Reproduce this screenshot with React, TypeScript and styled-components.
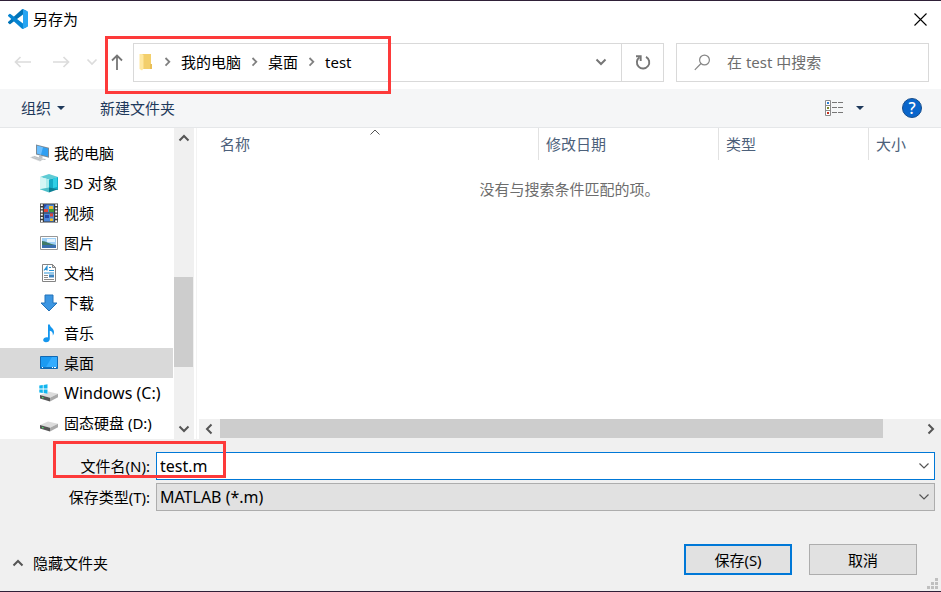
import React from 'react';
import styled, { createGlobalStyle, css } from 'styled-components';

const GlobalStyle = createGlobalStyle`
  *, *::before, *::after { box-sizing: border-box; }
  body { margin: 0; }
  body, button, input, select, table {
    font-family: "Noto Sans", "Noto Sans CJK SC", sans-serif;
    font-size: 15px;
    line-height: 20px;
    color: #000;
  }
  button { border: 0; padding: 0; background: none; cursor: default; }
  svg { display: block; flex: none; }
`;

const Dialog = styled.main`
  display: flex;
  flex-direction: column;
  min-height: 100vh;
  background: #fff;
  border-top: 1px solid #2f2038;
  border-bottom: 1px solid #2f2038;
`;

const TitleBar = styled.header`
  display: flex;
  align-items: center;
  gap: 5px;
  height: 36px;
  padding: 0 14px 0 8px;
`;

const Title = styled.h1`
  flex: 1;
  margin: 0;
  font-size: 15px;
  font-weight: 400;
`;

const NavRow = styled.div`
  position: relative;
  display: flex;
  align-items: center;
  height: 52px;
  padding: 0 12px 2px 14px;
`;

const Highlight = styled.div`
  position: absolute;
  border: 3px solid #fd3a3a;
  pointer-events: none;
`;

const AddressHighlight = styled(Highlight)`
  top: -1px;
  left: 105px;
  width: 286px;
  height: 58px;
`;

const NameHighlight = styled(Highlight)`
  top: 2px;
  left: 53px;
  width: 173px;
  height: 37px;
`;

const IconButton = styled.button<{ $gap?: number }>`
  display: flex;
  align-items: center;
  justify-content: center;
  margin-right: ${(p) => p.$gap ?? 0}px;
`;

const AddressBox = styled.div`
  display: flex;
  flex: 1;
  height: 39px;
  border: 1px solid #d9d9d9;
`;

const Crumbs = styled.nav`
  display: flex;
  flex: 1;
  align-items: center;
  gap: 10px;
  padding: 0 14px 0 5px;
`;

const FolderSlot = styled.span`
  padding-right: 2px;
`;

const Crumb = styled.a`
  color: #000;
  text-decoration: none;
`;

const Spacer = styled.span`
  flex: 1;
`;

const RefreshButton = styled.button`
  display: flex;
  align-items: center;
  justify-content: center;
  width: 42px;
  border-left: 1px solid #d9d9d9;
`;

const SearchBox = styled.label`
  display: flex;
  width: 253px;
  align-items: center;
  gap: 16px;
  height: 39px;
  margin-left: 12px;
  padding-left: 17px;
  border: 1px solid #d9d9d9;
`;

const SearchInput = styled.input`
  flex: 1;
  min-width: 0;
  padding: 0;
  border: 0;
  outline: 0;
  background: none;
  &::placeholder { color: #6d6d6d; opacity: 1; }
`;

const Toolbar = styled.div`
  display: flex;
  align-items: center;
  height: 39px;
  padding: 0 19px 0 21px;
  background: #f5f6f7;
  border-bottom: 1px solid #e5e7e9;
`;

const ToolButton = styled.button<{ $gap?: number }>`
  display: flex;
  align-items: center;
  gap: 6px;
  margin-right: ${(p) => p.$gap ?? 0}px;
  color: #1e395b;
`;

const Body = styled.div`
  display: flex;
  flex: 1;
`;

const Tree = styled.ul`
  width: 173px;
  margin: 0 1px 0 0;
  padding: 10px 0 0;
  list-style: none;
`;

const TreeItem = styled.button<{ $root?: boolean; $selected?: boolean; $latin?: boolean }>`
  display: flex;
  align-items: center;
  gap: ${(p) => (p.$root ? 4 : 5)}px;
  width: 100%;
  height: 30px;
  padding-left: ${(p) => (p.$root ? 30 : 39)}px;
  font-size: ${(p) => (p.$latin ? 16 : 15)}px;
  white-space: nowrap;
  background: ${(p) => (p.$selected ? '#d9d9d9' : 'transparent')};
`;

const Scrollbar = styled.div<{ $vertical?: boolean }>`
  display: flex;
  background: #f0f0f0;
  ${(p) =>
    p.$vertical
      ? css`
          flex-direction: column;
          width: 20px;
          padding-right: 1px;
        `
      : css`
          height: 20px;
          margin-left: 2px;
          padding-bottom: 1px;
        `}
`;

const ScrollArrow = styled.button<{ $vertical?: boolean }>`
  display: flex;
  align-items: center;
  justify-content: center;
  width: ${(p) => (p.$vertical ? 19 : 20)}px;
  height: ${(p) => (p.$vertical ? 20 : 19)}px;
`;

const ScrollSpace = styled.div<{ $size: number; $thumb?: boolean }>`
  flex: ${(p) => p.$size} 0 0;
  background: ${(p) => (p.$thumb ? '#cdcdcd' : 'transparent')};
`;

const FilePane = styled.section`
  display: flex;
  flex: 1;
  flex-direction: column;
  margin-left: 2px;
  border-left: 1px solid #f3f3f3;
`;

const FileArea = styled.div`
  flex: 1;
  padding-left: 15px;
`;

const FileTable = styled.table`
  width: 100%;
  table-layout: fixed;
  border-collapse: separate;
  border-spacing: 0;
`;

const Column = styled.th<{ $width?: number }>`
  position: relative;
  width: ${(p) => (p.$width ? `${p.$width}px` : 'auto')};
  height: 32px;
  padding: 0 0 0 8px;
  text-align: left;
  font-weight: 400;
  color: #4c607a;
  & + & { padding-left: 7px; border-left: 1px solid #e2e2e2; }
`;

const SortMark = styled.span`
  position: absolute;
  top: 0;
  left: calc(50% - 6px);
`;

const EmptyCell = styled.td`
  height: 58px;
  padding: 0 14px 0 0;
  text-align: center;
  color: #6d6d6d;
`;

const Footer = styled.footer`
  position: relative;
  background: #f0f0f0;
  padding: 13px 6px 16px 0;
`;

const Fields = styled.div`
  display: grid;
  grid-template-columns: 150px 1fr;
  gap: 3px 6px;
  align-items: center;
`;

const FieldLabel = styled.label`
  text-align: right;
`;

const Combo = styled.div<{ $active?: boolean }>`
  position: relative;
  display: flex;
  align-items: center;
  height: 28px;
  background: ${(p) => (p.$active ? '#fff' : '#e1e1e1')};
  border: 1px solid ${(p) => (p.$active ? '#0078d7' : '#adadad')};
`;

const fieldStyle = css`
  flex: 1;
  min-width: 0;
  height: 26px;
  padding: 0 0 0 3px;
  border: 0;
  outline: 0;
  background: none;
  font-size: 16px;
`;

const NameInput = styled.input`
  ${fieldStyle}
`;

const TypeSelect = styled.select`
  ${fieldStyle}
  appearance: none;
`;

const ComboArrow = styled.span`
  position: absolute;
  right: 4px;
  pointer-events: none;
`;

const Actions = styled.div`
  display: flex;
  align-items: center;
  gap: 17px;
  margin-top: 33px;
  padding: 0 12px;
`;

const HideButton = styled.button`
  display: flex;
  align-items: center;
  gap: 9px;
  margin: 7px auto 0 0;
`;

const ActionButtons = styled.div`
  display: flex;
  gap: 17px;
  padding-right: 6px;
`;

const PushButton = styled.button<{ $primary?: boolean }>`
  width: 108px;
  height: 31px;
  background: #e1e1e1;
  border: ${(p) => (p.$primary ? '2px solid #0078d7' : '1px solid #adadad')};
`;

const Grip = styled.span`
  position: absolute;
  right: 3px;
  bottom: 2px;
`;

type Direction = 'up' | 'down' | 'left' | 'right';
const chevrons: Record<Direction, [number, number, string]> = {
  up: [12, 8, 'M1.5 6.5 6 2l4.5 4.5'],
  down: [12, 8, 'M1.5 1.5 6 6l4.5-4.5'],
  left: [8, 12, 'M6.5 1.5 2 6l4.5 4.5'],
  right: [8, 12, 'M1.5 1.5 6 6l-4.5 4.5'],
};

function Chevron({ to, color = '#555', weight = 2 }: { to: Direction; color?: string; weight?: number }) {
  const [w, h, d] = chevrons[to];
  return (
    <svg width={w} height={h} viewBox={`0 0 ${w} ${h}`} fill="none" stroke={color} strokeWidth={weight}>
      <path d={d} />
    </svg>
  );
}

const CrumbChevron = () => (
  <svg width="7" height="10" viewBox="0 0 7 10" fill="none" stroke="#808080" strokeWidth="1.8">
    <path d="M1.5 1 5.3 4.8 1.5 8.6" />
  </svg>
);

const Caret = () => (
  <svg width="8" height="4" viewBox="0 0 8 4" fill="#1e395b">
    <path d="M0 0h8L4 4z" />
  </svg>
);

const CodeLogo = () => (
  <svg width="20" height="20" viewBox="0 0 100 100">
    <path fill="#0073b7" d="M96.46 10.8 75.86.88a6.23 6.23 0 0 0-7.1 1.2L1.3 63.6a4.17 4.17 0 0 0 0 6.16l5.51 5a4.17 4.17 0 0 0 5.32.24l81.23-61.62c2.73-2.07 6.64-.12 6.64 3.3v-.24a6.25 6.25 0 0 0-3.54-5.63z" />
    <path fill="#0584d2" d="m96.46 89.2-20.6 9.92a6.23 6.23 0 0 1-7.1-1.2L1.3 36.4a4.17 4.17 0 0 1 0-6.16l5.51-5a4.17 4.17 0 0 1 5.32-.24l81.23 61.62c2.73 2.07 6.64.12 6.64-3.3v.24a6.25 6.25 0 0 1-3.54 5.63z" />
    <path fill="#27a5f2" d="M75.86 99.13a6.23 6.23 0 0 1-7.11-1.21c2.31 2.31 6.25.67 6.25-2.59V4.67c0-3.26-3.94-4.9-6.25-2.59a6.23 6.23 0 0 1 7.11-1.21l20.6 9.91A6.25 6.25 0 0 1 100 16.41v67.18a6.25 6.25 0 0 1-3.54 5.63z" />
  </svg>
);

const CloseIcon = () => (
  <svg width="13" height="13" viewBox="0 0 13 13" stroke="#000" strokeWidth="1.1">
    <path d="M.5.5l12 12M12.5.5l-12 12" />
  </svg>
);

const ArrowIcon = ({ flip }: { flip?: boolean }) => (
  <svg width="17" height="12" viewBox="0 0 17 12" fill="none" stroke="#dcdcdc" strokeWidth="1.7">
    <path d={flip ? 'M0 6h15.5M10.5 1l5 5-5 5' : 'M17 6H1.5M6.5 1l-5 5 5 5'} />
  </svg>
);

const UpIcon = () => (
  <svg width="12" height="16" viewBox="0 0 12 16" fill="none" stroke="#767676" strokeWidth="1.8">
    <path d="M6 16V1.5M1 6.500 6 1.500l5 5" />
  </svg>
);

const FolderIcon = () => (
  <svg width="13" height="18" viewBox="0 0 13 18">
    <path fill="#f3cf6b" d="M3 1h9v10l1 1v4H3z" />
    <path fill="#ffe8a0" d="M.5 1H3l1.500 1v13.500L3 17.500.5 16z" />
    <path fill="#e9bf58" d="M11 11h2v5h-2z" />
  </svg>
);

const RefreshIcon = () => (
  <svg width="16" height="16" viewBox="0 0 16 16" fill="none" stroke="#767676" strokeWidth="1.9">
    <path d="M11 2.800A6.200 6.200 0 1 1 4.500 3.200" />
    <path d="M1 2.200h4.700v4.700" />
  </svg>
);

const SearchIcon = () => (
  <svg width="17" height="17" viewBox="0 0 17 17" fill="none" stroke="#858585" strokeWidth="1.2">
    <circle cx="10.500" cy="6" r="4.900" />
    <path d="M7 9.500.8 15.800" />
  </svg>
);

const ViewIcon = () => (
  <svg width="19" height="16" viewBox="0 0 19 16">
    <path fill="#fff" stroke="#8a8a8a" d="M.5.5h5v15h-5zM.5 5.500h5M.5 10.500h5" />
    <path fill="#2b7cd3" d="M2 2h2v2H2z" />
    <path fill="#7a8a2c" d="M2 7h2v2H2z" />
    <path fill="#c22f1e" d="M2 12h2v2H2z" />
    <path stroke="#777" strokeDasharray="5 1" d="M7 2.500h12M7 7.500h12M7 12.500h12" />
  </svg>
);

const HelpBadge = styled.button`
  display: flex;
  align-items: center;
  justify-content: center;
  width: 20px;
  height: 20px;
  margin-left: 38px;
  border: 1px solid #174e8c;
  border-radius: 50%;
  background: #0a66cb;
  color: #fff;
  font-size: 16px;
  font-weight: 500;
`;

const PcIcon = () => (
  <svg width="20" height="18" viewBox="0 0 20 18">
    <path fill="#7b8a96" d="M6 .5 19 3.800v10L6 10.500z" />
    <path fill="#2f9ff2" d="M7 1.800 18 4.600v8L7 9.600z" />
    <path fill="#6bbfff" d="m7 1.800 6 1.500-2 7.400-4-1.100z" />
    <path fill="#b9bfc4" d="m9 11.500 4 1-1 2 4 .5-1 1-6-1z" />
    <path fill="#d5d8da" d="m0 13.500 4-1.800 10 3.300-4 2.500z" />
    <path stroke="#aeb3b7" strokeWidth=".7" d="m2 13.300 9 3M4 12.500l8.500 2.900" />
  </svg>
);

const CubeIcon = () => (
  <svg width="20" height="20" viewBox="0 0 20 20">
    <path fill="#5fcbd4" d="m1 4 9-3 9 3-9 2.500z" />
    <path fill="#a9ecec" d="m1 4 9 2.500v9L1 17z" />
    <path fill="#d4f6f5" d="m1 4 6 1.700V15l-6 1z" />
    <path fill="#14abc6" d="m19 4-9 2.500v9l9 1.500z" />
    <path fill="#2fd0e6" d="m14 5.400 4-1V14l-4 1z" />
    <path fill="#0a7f94" d="m10 14.500 9 1.800-9 3.200z" />
    <path fill="#4dbfc9" d="m1 16.300 9-1.800v5z" />
  </svg>
);

const VideoIcon = () => (
  <svg width="20" height="20" viewBox="0 0 20 20">
    <path fill="#3b3b3b" d="M1 .5h18v19H1z" />
    <path fill="#4b86d8" d="M5 1.500h10v8H5zM5 10.500h10v8H5z" />
    <path fill="#e0453a" d="M5 6h4v3H5zM11 10.500h3v3h-3z" />
    <path fill="#f0c02c" d="M10 3h4v3h-4zM11 15.500h3v2.500h-3z" />
    <path fill="#3b9a3d" d="M10 6h5v3h-5z" />
    <path fill="#2444a8" d="M5 1.500h3l-3 4zM6 12h4v3H6z" />
    <path stroke="#fff" strokeWidth="2" strokeDasharray="1.800 1.400" d="M2.800 1.200v18M17.200 1.200v18" />
  </svg>
);

const PictureIcon = () => (
  <svg width="20" height="16" viewBox="0 0 20 16">
    <path fill="#fff" stroke="#979797" d="M1.500 1.500h17v13h-17z" />
    <path fill="#9fd0f7" d="M3 3h14v10H3z" />
    <path fill="#e4f3fd" d="M8 4h8v3H8z" />
    <path fill="#3f7a68" d="M3 6c4 0 7 3 14 4v1H3z" />
    <path fill="#3a6fae" d="M3 10h14v3H3z" />
  </svg>
);

const DocIcon = () => (
  <svg width="20" height="20" viewBox="0 0 20 20">
    <path fill="#fff" stroke="#848484" d="M3.500 1.500h10l3 3v14h-13z" />
    <path fill="#ddd" stroke="#848484" d="M13.500 1.500v3h3z" />
    <path stroke="#2a93d5" strokeWidth="1.200" fill="none" d="m5 7.500 3-4v4M6 6.500h2M10 4.500h2M10 7.500h5M5 10h10" />
    <path fill="#3d85c0" d="M10 11.500h5v3h-5z" />
    <path stroke="#8b8b8b" d="M5 12.500h4M5 14.500h4M5 16.500h10" />
  </svg>
);

const DownloadIcon = () => (
  <svg width="20" height="18" viewBox="0 0 20 18">
    <path fill="#3c96e2" stroke="#2372b9" d="M6 1h8v8h4l-8 8-8-8h4z" />
  </svg>
);

const MusicIcon = () => (
  <svg width="20" height="19" viewBox="0 0 20 19">
    <path fill="#1496ee" d="M9 .5h1.800c.4 3 4.200 3.800 4.200 7.500 0 1.400-.5 2.500-1.200 3.500.4-2.800-.8-4.200-3-4.800v8.200c0 2-1.800 3.300-3.800 3.300-1.700 0-2.800-.8-2.800-2.100 0-2 2.400-3.200 4.800-2.600z" />
  </svg>
);

const DesktopIcon = () => (
  <svg width="20" height="16" viewBox="0 0 20 16">
    <path fill="#1b9af2" stroke="#1168b3" d="M1.500 1.500h17v12h-17z" />
    <path fill="#33acff" d="M13 2h5v10H7z" />
    <path fill="#1272bd" d="M2 12h16v1H2z" />
    <path fill="#fff" d="M3 12h1v1H3zM13 12h1v1h-1zM15 12h2v1h-2z" />
  </svg>
);

const DriveIcon = ({ windows }: { windows?: boolean }) => (
  <svg width="20" height="18" viewBox="0 0 20 18">
    <path fill="#dcdcdc" d="m1 11 8-3.500 10 2.200-8 4z" />
    <path fill="#555" d="m1 11 10 2.700v3.800L1 14.500z" />
    <path fill="#a9a9a9" d="m11 13.700 8-4v3.600l-8 4.200z" />
    <path fill="#4fe06a" d="M3 13h1.500v1.300H3z" />
    {windows && <path fill="#fff" d="M0 0h9v9.500H0z" />}
    {windows && <path fill="#12b5ee" d="m.3 1.500 3.500-.5v3.600H.3zM4.600.9 8.500.3v4.300H4.600zM.3 5.400h3.500V9L.3 8.500zM4.600 5.400h3.900v4.300l-3.900-.6z" />}
  </svg>
);

const GripIcon = () => (
  <svg width="11" height="11" viewBox="0 0 11 11" fill="#bfbfbf">
    <path d="M8 0h3v3H8zM4 4h3v3H4zM8 4h3v3H8zM0 8h3v3H0zM4 8h3v3H4zM8 8h3v3H8z" />
  </svg>
);

const places = [
  { name: '我的电脑', icon: <PcIcon />, root: true },
  { name: '3D 对象', icon: <CubeIcon /> },
  { name: '视频', icon: <VideoIcon /> },
  { name: '图片', icon: <PictureIcon /> },
  { name: '文档', icon: <DocIcon /> },
  { name: '下载', icon: <DownloadIcon /> },
  { name: '音乐', icon: <MusicIcon /> },
  { name: '桌面', icon: <DesktopIcon />, selected: true },
  { name: 'Windows (C:)', icon: <DriveIcon windows />, latin: true },
  { name: '固态硬盘 (D:)', icon: <DriveIcon /> },
];

const path = ['我的电脑', '桌面', 'test'];

export default function App() {
  return (
    <>
      <GlobalStyle />
      <Dialog>
        <TitleBar>
          <CodeLogo />
          <Title>另存为</Title>
          <IconButton aria-label="关闭"><CloseIcon /></IconButton>
        </TitleBar>

        <NavRow>
          <IconButton aria-label="后退" $gap={22}><ArrowIcon /></IconButton>
          <IconButton aria-label="前进" $gap={16}><ArrowIcon flip /></IconButton>
          <IconButton aria-label="最近位置" $gap={13}><Chevron to="down" color="#dcdcdc" weight={1.7} /></IconButton>
          <IconButton aria-label="上移" $gap={10}><UpIcon /></IconButton>
          <AddressBox>
            <Crumbs aria-label="路径">
              <FolderSlot><FolderIcon /></FolderSlot>
              {path.map((part) => (
                <React.Fragment key={part}>
                  <CrumbChevron />
                  <Crumb href="#">{part}</Crumb>
                </React.Fragment>
              ))}
              <Spacer />
              <IconButton aria-label="历史记录"><Chevron to="down" color="#767676" /></IconButton>
            </Crumbs>
            <RefreshButton aria-label="刷新"><RefreshIcon /></RefreshButton>
          </AddressBox>
          <SearchBox>
            <SearchIcon />
            <SearchInput type="text" aria-label="搜索" placeholder="在 test 中搜索" />
          </SearchBox>
          <AddressHighlight />
        </NavRow>

        <Toolbar>
          <ToolButton $gap={35}>组织<Caret /></ToolButton>
          <ToolButton>新建文件夹</ToolButton>
          <Spacer />
          <ToolButton aria-label="更改视图" $gap={12}><ViewIcon /></ToolButton>
          <ToolButton aria-label="更多选项"><Caret /></ToolButton>
          <HelpBadge aria-label="帮助">?</HelpBadge>
        </Toolbar>

        <Body>
          <Tree>
            {places.map((p) => (
              <li key={p.name}>
                <TreeItem $root={p.root} $selected={p.selected} $latin={p.latin}>
                  {p.icon}
                  {p.name}
                </TreeItem>
              </li>
            ))}
          </Tree>
          <Scrollbar $vertical>
            <ScrollArrow $vertical aria-label="向上滚动"><Chevron to="up" /></ScrollArrow>
            <ScrollSpace $size={129} />
            <ScrollSpace $size={90} $thumb />
            <ScrollSpace $size={52} />
            <ScrollArrow $vertical aria-label="向下滚动"><Chevron to="down" /></ScrollArrow>
          </Scrollbar>
          <FilePane>
            <FileArea>
              <FileTable>
                <thead>
                  <tr>
                    <Column>
                      名称
                      <SortMark><Chevron to="up" weight={1} /></SortMark>
                    </Column>
                    <Column $width={180}>修改日期</Column>
                    <Column $width={150}>类型</Column>
                    <Column $width={73}>大小</Column>
                  </tr>
                </thead>
                <tbody>
                  <tr>
                    <EmptyCell colSpan={4}>没有与搜索条件匹配的项。</EmptyCell>
                  </tr>
                </tbody>
              </FileTable>
            </FileArea>
            <Scrollbar>
              <ScrollArrow aria-label="向左滚动"><Chevron to="left" /></ScrollArrow>
              <ScrollSpace $size={1} />
              <ScrollSpace $size={663} $thumb />
              <ScrollSpace $size={38} />
              <ScrollArrow aria-label="向右滚动"><Chevron to="right" /></ScrollArrow>
            </Scrollbar>
          </FilePane>
        </Body>

        <Footer>
          <Fields>
            <FieldLabel htmlFor="file-name">文件名(N):</FieldLabel>
            <Combo $active>
              <NameInput id="file-name" type="text" defaultValue="test.m" />
              <ComboArrow><Chevron to="down" weight={1.2} /></ComboArrow>
            </Combo>
            <FieldLabel htmlFor="file-type">保存类型(T):</FieldLabel>
            <Combo>
              <TypeSelect id="file-type">
                <option>MATLAB (*.m)</option>
              </TypeSelect>
              <ComboArrow><Chevron to="down" weight={1.2} /></ComboArrow>
            </Combo>
          </Fields>
          <Actions>
            <HideButton><Chevron to="up" />隐藏文件夹</HideButton>
            <ActionButtons>
              <PushButton $primary>保存(S)</PushButton>
              <PushButton>取消</PushButton>
            </ActionButtons>
          </Actions>
          <Grip><GripIcon /></Grip>
          <NameHighlight />
        </Footer>
      </Dialog>
    </>
  );
}
